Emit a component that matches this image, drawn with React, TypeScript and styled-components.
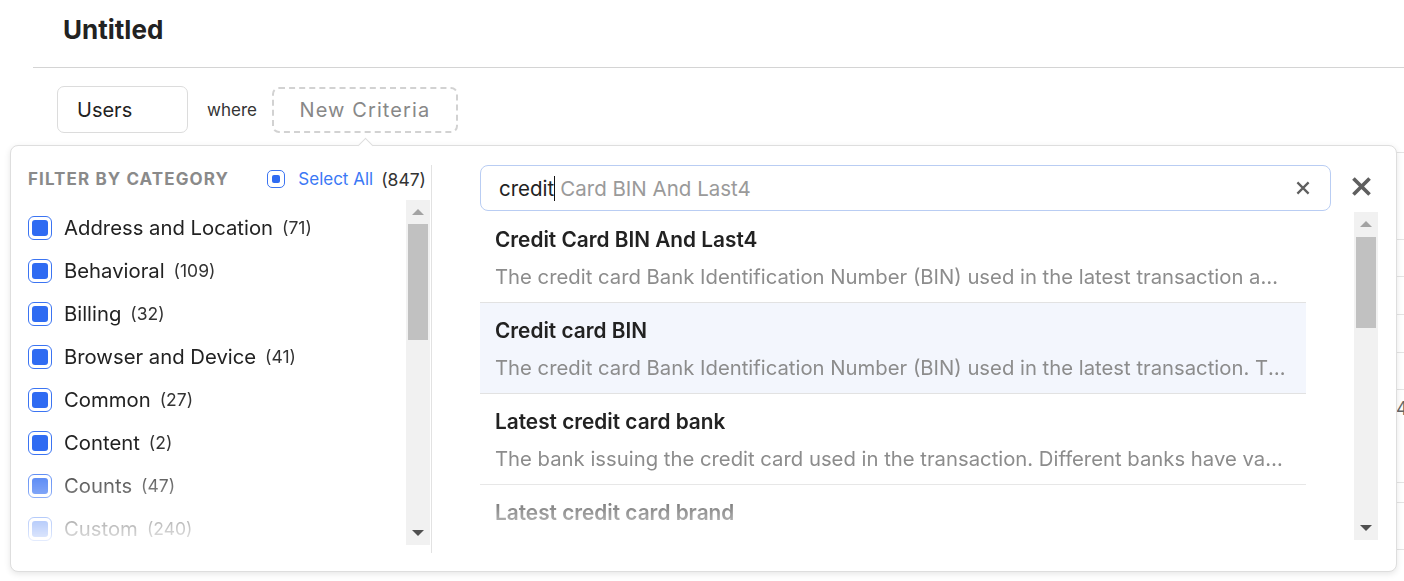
import { FC } from 'react';
import styled, { createGlobalStyle } from 'styled-components';

const categories: [string, number][] = [
  ['Address and Location', 71],
  ['Behavioral', 109],
  ['Billing', 32],
  ['Browser and Device', 41],
  ['Common', 27],
  ['Content', 2],
  ['Counts', 47],
  ['Custom', 240]
];

const results = [
  {
    title: 'Credit Card BIN And Last4',
    description: 'The credit card Bank Identification Number (BIN) used in the latest transaction and the last four digits of the card number.'
  },
  {
    title: 'Credit card BIN',
    description: 'The credit card Bank Identification Number (BIN) used in the latest transaction. This is the first six digits of the card.',
    active: true
  },
  {
    title: 'Latest credit card bank',
    description: 'The bank issuing the credit card used in the transaction. Different banks have varying risk profiles.'
  },
  {
    title: 'Latest credit card brand',
    description: 'The brand of the credit card used in the latest transaction.'
  }
];

// background table rows peeking out on the right of the popup
const tableRows = [87, 37, 38, 38, 37, 93, 20, 47];

const CrossIcon: FC<{ size: number; weight: number }> = ({ size, weight }) => (
  <svg width={size} height={size} viewBox="0 0 20 20">
    <path d="M3 3 L17 17 M17 3 L3 17" stroke="#5f5f5f" strokeWidth={weight} fill="none" />
  </svg>
);

interface ScrollbarProps {
  offset: number;
  thumb: number;
}

const Scrollbar: FC<ScrollbarProps> = ({ offset, thumb }) => (
  <Track>
    <ArrowBox>
      <UpArrow />
    </ArrowBox>
    <Thumb $offset={offset} $height={thumb} />
    <Spacer />
    <ArrowBox>
      <DownArrow />
    </ArrowBox>
  </Track>
);

const App: FC = () => {
  return (
    <>
      <GlobalStyle />
      <TitleBar>
        <Title>Untitled</Title>
      </TitleBar>
      <Divider />
      <Workspace>
        <CriteriaRow>
          <EntityButton>Users</EntityButton>
          <WhereLabel>where</WhereLabel>
          <NewCriteria>New Criteria</NewCriteria>
        </CriteriaRow>
        <DataTable>
          {tableRows.map((h, i) => (
            <DataRow key={i} $height={h}>
              <span />
              <DataCell>{i === 5 ? '4' : ''}</DataCell>
            </DataRow>
          ))}
        </DataTable>

        <Popup>
          <Notch />
          <CategoryPanel>
            <CategoryHeader>
              <HeaderLabel>Filter by category</HeaderLabel>
              <SelectAll>
                <SmallCheck />
                <SelectAllText>Select All</SelectAllText>
                <Count>(847)</Count>
              </SelectAll>
            </CategoryHeader>
            <CategoryScroll>
              <CategoryList>
                {categories.map(([name, count]) => (
                  <CategoryItem key={name}>
                    <Checkbox />
                    <CategoryName>{name}</CategoryName>
                    <Count>({count})</Count>
                  </CategoryItem>
                ))}
              </CategoryList>
              <Scrollbar offset={0} thumb={116} />
            </CategoryScroll>
          </CategoryPanel>

          <ResultsPanel>
            <SearchRow>
              <SearchBox>
                <Typed>credit</Typed>
                <Caret />
                <Ghost>Card BIN And Last4</Ghost>
                <ClearButton>
                  <CrossIcon size={16} weight={2.8} />
                </ClearButton>
              </SearchBox>
              <CloseButton>
                <CrossIcon size={23} weight={3.2} />
              </CloseButton>
            </SearchRow>
            <ResultsBody>
              <ResultsList>
                {results.map(r => (
                  <ResultItem key={r.title} $active={!!r.active}>
                    <ResultTitle>{r.title}</ResultTitle>
                    <ResultDescription>{r.description}</ResultDescription>
                  </ResultItem>
                ))}
              </ResultsList>
              <Scrollbar offset={1} thumb={91} />
            </ResultsBody>
          </ResultsPanel>
        </Popup>
      </Workspace>
    </>
  );
};

const GlobalStyle = createGlobalStyle`
  body {
    margin: 0;
    background: #fff;
    color: #222;
    font-family: Inter, "Noto Sans", sans-serif;
    overflow: hidden;
  }

  #root {
    min-height: 100vh;
  }
`;

const TitleBar = styled.div`
  padding: 13px 0 0 63px;
`;

const Title = styled.h1`
  margin: 0;
  font-size: 26px;
  line-height: 34px;
  font-weight: 700;
  color: #222;
`;

const Divider = styled.div`
  margin: 20px 0 0 33px;
  height: 1px;
  background: #d4d4d4;
`;

const Workspace = styled.div`
  position: relative;
`;

const CriteriaRow = styled.div`
  display: flex;
  align-items: center;
  padding: 18px 0 0 57px;
`;

const EntityButton = styled.div`
  box-sizing: border-box;
  width: 131px;
  height: 47px;
  display: flex;
  align-items: center;
  padding-left: 19px;
  border: 1px solid #dcdcdc;
  border-radius: 7px;
  font-size: 20px;
  color: #222;
`;

const WhereLabel = styled.span`
  margin: 0 15px 0 19px;
  font-size: 17px;
  color: #333;
`;

const NewCriteria = styled.div`
  box-sizing: border-box;
  width: 186px;
  height: 46px;
  display: flex;
  align-items: center;
  justify-content: center;
  border: 2px dashed #d2d2d2;
  border-radius: 7px;
  font-size: 20px;
  letter-spacing: 1.1px;
  color: #888;
`;

const DataTable = styled.div`
  margin: 19px 0 0 33px;
  border-top: 1px solid #e4e4e4;
`;

const DataRow = styled.div<{ $height: number }>`
  display: grid;
  grid-template-columns: 1363px 1fr;
  height: ${p => p.$height - 1}px;
  border-bottom: 1px solid #e4e4e4;
`;

const DataCell = styled.div`
  padding-top: 8px;
  font-size: 18px;
  color: #666;
  overflow: hidden;
`;

const Popup = styled.div`
  position: absolute;
  top: 77px;
  left: 10px;
  width: 1387px;
  height: 427px;
  box-sizing: border-box;
  display: flex;
  background: #fff;
  border: 1px solid #dedede;
  border-radius: 8px;
  box-shadow: 0 2px 6px rgba(0, 0, 0, 0.1);
`;

const Notch = styled.div`
  position: absolute;
  top: -6px;
  left: 349px;
  width: 10px;
  height: 10px;
  background: #fff;
  border-top: 1px solid #dedede;
  border-left: 1px solid #dedede;
  transform: rotate(45deg);
`;

const CategoryPanel = styled.div`
  width: 421px;
  flex-shrink: 0;
  box-sizing: border-box;
  margin: 19px 0 18px;
  padding-right: 1px;
  display: flex;
  flex-direction: column;
  border-right: 1px solid #e2e2e2;
`;

const CategoryHeader = styled.div`
  height: 28px;
  display: flex;
  align-items: center;
  justify-content: space-between;
  padding: 0 4px 0 17px;
  white-space: nowrap;
`;

const HeaderLabel = styled.span`
  font-size: 17px;
  font-weight: 700;
  text-transform: uppercase;
  letter-spacing: 1.1px;
  color: #8a8a8a;
`;

const SelectAll = styled.div`
  display: flex;
  align-items: center;
`;

const SmallCheck = styled.span`
  box-sizing: border-box;
  width: 18px;
  height: 18px;
  border: 1.5px solid #3b74f2;
  border-radius: 5px;
  display: flex;
  align-items: center;
  justify-content: center;

  &::after {
    content: '';
    width: 8px;
    height: 8px;
    border-radius: 2px;
    background: #2f6bf2;
  }
`;

const SelectAllText = styled.span`
  margin: 0 8px 0 13px;
  font-size: 17px;
  color: #3b78f5;
`;

const Count = styled.span`
  font-size: 17.5px;
  color: #333;
`;

const CategoryScroll = styled.div`
  height: 345px;
  margin: 7px 0 0 7px;
  display: flex;
`;

const CategoryList = styled.div`
  flex: 1;
  min-width: 0;
  overflow: hidden;
  padding-top: 6px;
  -webkit-mask-image: linear-gradient(to bottom, #000 255px, transparent 355px);
  mask-image: linear-gradient(to bottom, #000 255px, transparent 355px);
`;

const CategoryItem = styled.div`
  height: 43px;
  display: flex;
  align-items: center;
  padding-left: 10px;
  white-space: nowrap;
`;

const Checkbox = styled.span`
  box-sizing: border-box;
  width: 24px;
  height: 24px;
  flex-shrink: 0;
  border: 1.5px solid #3b74f2;
  border-radius: 6px;
  display: flex;
  align-items: center;
  justify-content: center;

  &::after {
    content: '';
    width: 16px;
    height: 16px;
    border-radius: 3px;
    background: #2f6bf2;
  }
`;

const CategoryName = styled.span`
  margin: 0 9px 0 12px;
  font-size: 20.3px;
  color: #222;
`;

const Track = styled.div`
  width: 24px;
  flex-shrink: 0;
  display: flex;
  flex-direction: column;
  align-items: center;
  background: #f1f1f1;
`;

const ArrowBox = styled.div`
  height: 24px;
  width: 100%;
  display: flex;
  align-items: center;
  justify-content: center;
`;

const UpArrow = styled.span`
  width: 0;
  height: 0;
  border-left: 6px solid transparent;
  border-right: 6px solid transparent;
  border-bottom: 6px solid #a3a3a3;
`;

const DownArrow = styled.span`
  width: 0;
  height: 0;
  border-left: 6px solid transparent;
  border-right: 6px solid transparent;
  border-top: 6px solid #505050;
`;

const Thumb = styled.div<{ $offset: number; $height: number }>`
  margin-top: ${p => p.$offset}px;
  width: 20px;
  height: ${p => p.$height}px;
  background: #c1c1c1;
`;

const Spacer = styled.div`
  flex: 1;
`;

const ResultsPanel = styled.div`
  flex: 1;
  min-width: 0;
  display: flex;
  flex-direction: column;
  padding: 19px 18px 0 48px;
`;

const SearchRow = styled.div`
  display: flex;
  align-items: flex-start;
`;

const SearchBox = styled.div`
  flex: 1;
  min-width: 0;
  height: 46px;
  box-sizing: border-box;
  display: flex;
  align-items: center;
  padding: 0 18px;
  border: 1px solid #b9cdf3;
  border-radius: 8px;
  font-size: 20.5px;
`;

const Typed = styled.span`
  color: #222;
`;

const Caret = styled.span`
  width: 1px;
  height: 25px;
  margin: 0 5px 0 0;
  background: #111;
`;

const Ghost = styled.span`
  flex: 1;
  color: #9a9a9a;
`;

const ClearButton = styled.span`
  display: flex;
  margin-right: 1px;
`;

const CloseButton = styled.span`
  width: 28px;
  flex-shrink: 0;
  margin: 10px 0 0 19px;
  display: flex;
`;

const ResultsBody = styled.div`
  height: 328px;
  margin-top: 1px;
  display: flex;
`;

const ResultsList = styled.div`
  flex: 1;
  min-width: 0;
  margin-right: 48px;
  overflow: hidden;
  -webkit-mask-image: linear-gradient(to bottom, #000 258px, transparent 338px);
  mask-image: linear-gradient(to bottom, #000 258px, transparent 338px);
`;

const ResultItem = styled.div<{ $active: boolean }>`
  padding: 16px 20px 13px 15px;
  border-bottom: 1px solid #e2e2e2;
  background: ${p => (p.$active ? '#f3f6fd' : '#fff')};
`;

const ResultTitle = styled.div`
  font-size: 20.8px;
  line-height: 24px;
  font-weight: 600;
  color: #222;
`;

const ResultDescription = styled.div`
  margin-top: 13px;
  font-size: 20.3px;
  line-height: 24px;
  color: #8c8c8c;
  white-space: nowrap;
  overflow: hidden;
  text-overflow: ellipsis;
`;

export default App;
